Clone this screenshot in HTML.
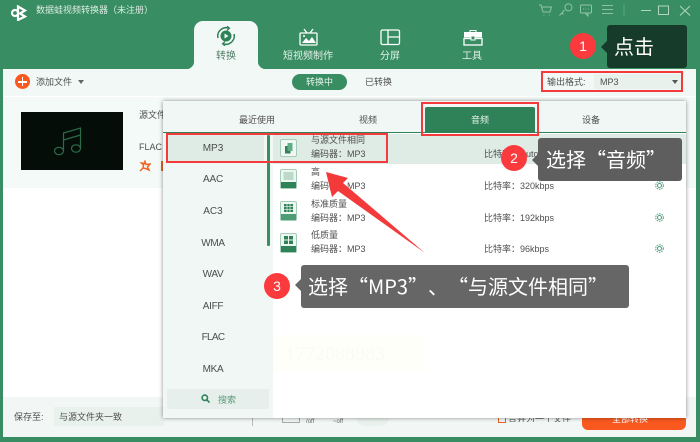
<!DOCTYPE html>
<html><head><meta charset="utf-8">
<style>
html,body{margin:0;padding:0}
body{width:700px;height:442px;overflow:hidden;position:relative;background:#388e62;font-family:"Liberation Sans","Noto Sans CJK SC",sans-serif;color:#555}
.a{position:absolute;white-space:nowrap}
.t{position:absolute;white-space:nowrap;font-size:9px;line-height:12px;color:#4f4f4f}
.c{transform:translateX(-50%)}
.f{position:absolute;left:163px;width:100px;text-align:center;font-size:10px;line-height:14px;color:#4a4f4d}
.red{position:absolute;border:2px solid #f43a3a;box-sizing:border-box}
.tip{position:absolute;border-radius:3px;color:#fff;white-space:nowrap;font-family:"Noto Sans CJK SC",sans-serif;text-spacing-trim:space-all;font-feature-settings:"palt" 0,"halt" 0,"chws" 0}
.num{position:absolute;width:26px;height:26px;border-radius:50%;background:#fa3a3c;color:#fff;text-align:center;font-size:14px;line-height:26px}
.gear{position:absolute;left:655px;width:9px;height:9px}
</style></head><body>
<!-- content background -->
<div class="a" style="left:3px;top:69px;width:693px;height:368px;background:#fff"></div>
<div class="a" style="left:3px;top:69px;width:693px;height:27px;background:#f2f8f5"></div>
<div class="a" style="left:3px;top:97px;width:693px;height:91px;background:#f4faf8"></div>
<div class="a" style="left:3px;top:397px;width:693px;height:40px;background:#f2f7f5"></div>

<!-- title bar -->
<svg class="a" style="left:10px;top:5px" width="18" height="16" viewBox="0 0 18 16" fill="none" stroke="#fff" stroke-width="2.2"><path d="M8 1.500 15 5.500 10 8.500 15 11.500 8 15V1.500Z"/><circle cx="5" cy="8" r="3"/></svg>
<div class="a" style="left:36px;top:4px;font-size:9px;line-height:12px;color:#dcebe3">数据蛙视频转换器（未注册）</div>
<svg class="a" style="left:538px;top:3px" width="158" height="14" viewBox="0 0 158 14" fill="none" stroke="#8fc3a8" stroke-width="1">
<path d="M1 2h2l2 7h7l1.500-5H4M5.500 12h.800M11 12h.800"/>
<path d="M21.500 12.500l5-5.500M24 10l1.500 1.500M27 4.500a3.500 3.500 0 1 1 2 3 3.500 3.500 0 0 1-2-3Z"/>
<rect x="42.500" y="2" width="11" height="8" rx="1"/><path d="M50 10v3l-3-3M45 6h.800M47.500 6h.800M50 6h.800"/>
<path d="M64 2.500h11M64 6.500h11M64 10.500h11"/>
<path d="M86 1v12" stroke="#5ba580"/>
<path d="M103 7.500h10" stroke="#b3d5c3"/>
<rect x="120.500" y="3" width="10" height="8.500" stroke="#b3d5c3"/>
<path d="M142 3l10 9.500M152 3l-10 9.500" stroke="#b3d5c3"/>
</svg>

<!-- main tabs -->
<div class="a" style="left:194px;top:21px;width:64px;height:48px;background:#f2f8f5;border-radius:9px 9px 0 0"></div>
<div class="a" style="left:186px;top:61px;width:8px;height:8px;background:radial-gradient(circle at 0 0,#388e62 8px,#f2f8f5 8.500px)"></div>
<div class="a" style="left:258px;top:61px;width:8px;height:8px;background:radial-gradient(circle at 100% 0,#388e62 8px,#f2f8f5 8.500px)"></div>
<svg class="a" style="left:216px;top:26px" width="20" height="20" viewBox="0 0 20 20" fill="none" stroke="#2f8257" stroke-width="1.500"><path d="M2 12A8.300 8.300 0 0 1 13 2.300M18 8A8.300 8.300 0 0 1 7 17.700"/><path d="M11 0l2.500 2.300L11 4.500M9 15.500 6.500 17.700 9 20" stroke-width="1.200"/><circle cx="10" cy="10" r="5.500" fill="#2f8257" stroke="none"/><path d="M8.500 7.500v5l4-2.500z" fill="#f2f8f5" stroke="none"/></svg>
<div class="a c" style="left:226px;top:50px;font-size:10px;line-height:13px;color:#54806a">转换</div>
<svg class="a" style="left:299px;top:28px" width="19" height="18" viewBox="0 0 19 18" fill="none" stroke="#fff" stroke-width="1.300"><rect x="1" y="5" width="17" height="12" rx="1"/><path d="M5 1l3 4M14 1l-3 4"/><path d="M3 15l4-5 3 3 3-4 4 6z" fill="#fff" stroke="none"/><circle cx="5" cy="8" r="1" fill="#fff" stroke="none"/></svg>
<div class="a c" style="left:308px;top:50px;font-size:10px;line-height:13px;color:#e3f0e9">短视频制作</div>
<svg class="a" style="left:380px;top:29px" width="21" height="17" viewBox="0 0 21 17" fill="none" stroke="#fff" stroke-width="1.300"><rect x="1" y="1" width="18.500" height="14.500" rx="1.500"/><path d="M8 1v14.500M8 8h11.500"/></svg>
<div class="a c" style="left:390px;top:50px;font-size:10px;line-height:13px;color:#e3f0e9">分屏</div>
<svg class="a" style="left:463px;top:29px" width="20" height="17" viewBox="0 0 20 17"><path d="M7 3V1.500h6V3" stroke="#fff" fill="none"/><rect x="1" y="3" width="18" height="5.500" fill="#fff"/><rect x="1" y="9.500" width="18" height="6.500" fill="none" stroke="#fff" stroke-width="1.300"/><rect x="8" y="7" width="4" height="4" fill="#388e62" stroke="#fff"/></svg>
<div class="a c" style="left:472px;top:50px;font-size:10px;line-height:13px;color:#e3f0e9">工具</div>

<!-- toolbar -->
<div class="a" style="left:15px;top:74px;width:15px;height:15px;border-radius:50%;background:#f9591f"></div>
<div class="a" style="left:18px;top:81px;width:9px;height:1.500px;background:#fff"></div>
<div class="a" style="left:21.800px;top:77px;width:1.500px;height:9px;background:#fff"></div>
<div class="t" style="left:36px;top:76px">添加文件</div>
<div class="a" style="left:78px;top:80px;border:3px solid transparent;border-top:4px solid #666;border-bottom:0"></div>
<div class="a" style="left:292px;top:74px;width:55px;height:16px;border-radius:8px;background:#388e62;color:#e9f4ee;font-size:9px;line-height:16px;text-align:center">转换中</div>
<div class="t" style="left:365px;top:76px">已转换</div>
<div class="a" style="left:594px;top:74px;width:88px;height:15px;background:#e9f1ed"></div>
<div class="t" style="left:547px;top:76px">输出格式:</div>
<div class="t" style="left:600px;top:76px">MP3</div>
<div class="a" style="left:672px;top:80px;border:3px solid transparent;border-top:4px solid #555;border-bottom:0"></div>
<div class="red" style="left:541px;top:71px;width:142px;height:21px"></div>

<!-- file card -->
<div class="a" style="left:21px;top:112px;width:102px;height:58px;background:#050d09"></div>
<svg class="a" style="left:53px;top:126px" width="30" height="30" viewBox="0 0 30 30" fill="none" stroke="#2a6b4a" stroke-width="1.200"><ellipse cx="6" cy="25" rx="4.500" ry="3.700"/><ellipse cx="23" cy="22.500" rx="4.500" ry="3.700"/><path d="M10.500 25V7L27.500 2v20M10.500 14 27.500 9"/></svg>
<div class="t" style="left:139px;top:109px">源文件</div>
<div class="t" style="left:139px;top:141px;font-size:9px">FLAC</div>
<svg class="a" style="left:139px;top:160px" width="12" height="12" viewBox="0 0 12 12" fill="none" stroke="#f36424" stroke-width="1.500"><path d="M1 11l3-3M6 1.500l1 3 4-.500-2.500 3L10 10 6.500 8.500 4 8l.500-3L2.500 3l3 .500z"/></svg>
<div class="a" style="left:161px;top:161px;width:2px;height:10px;background:#f36424"></div>

<!-- bottom bar -->
<div class="t" style="left:14px;top:411px">保存至:</div>
<div class="a" style="left:54px;top:407px;width:110px;height:19px;background:#e9f1ed"></div>
<div class="t" style="left:59px;top:411px">与源文件夹一致</div>
<div class="a" style="left:252px;top:418px;width:1px;height:8px;background:#bbb"></div>
<div class="a" style="left:282px;top:418px;width:16px;height:4px;border:1px solid #aaa;border-top:0"></div>
<div class="a" style="left:306px;top:419px;font-size:6px;line-height:7px;color:#666">/off</div>
<div class="a" style="left:333px;top:419px;font-size:6px;line-height:7px;color:#666">~off</div>
<div class="a" style="left:357px;top:418px;width:32px;height:8px;border-radius:0 0 8px 8px;background:#e9f1ed"></div>
<div class="a" style="left:498px;top:418px;width:8px;height:5px;border:1.500px solid #e8602c;border-top:0;box-sizing:border-box"></div>
<div class="a" style="left:582px;top:418px;width:104px;height:12px;background:#f9591f;border-radius:0 0 6px 6px;overflow:hidden"></div>
<div class="a" style="left:508px;top:413px;height:9px;overflow:hidden;width:65px;font-size:9px;line-height:12px;color:#555">合并为一个文件</div>
<div class="a" style="left:612px;top:413px;width:50px;height:9px;overflow:visible;font-size:9px;line-height:12px;color:#fff;z-index:1">全部转换</div>

<!-- format panel -->
<div class="a" style="left:163px;top:101px;width:523px;height:317px;background:#fff;box-shadow:0 0 4px rgba(0,0,0,.45);z-index:2"></div>
<div style="position:absolute;left:0;top:0;width:700px;height:442px;z-index:3">
<div class="a" style="left:163px;top:101px;width:523px;height:31px;background:#f1f7f5"></div>
<div class="a" style="left:163px;top:132px;width:523px;height:1px;background:#2f8257"></div>
<div class="a" style="left:163px;top:133px;width:110px;height:285px;background:#f1f7f5"></div>
<div class="t c" style="left:257px;top:114px">最近使用</div>
<div class="t c" style="left:368px;top:114px">视频</div>
<div class="a" style="left:425px;top:107px;width:110px;height:25px;background:#2f8257;border-radius:2px 2px 0 0"></div>
<div class="t c" style="left:480px;top:114px;color:#e8f3ed">音频</div>
<div class="t c" style="left:591px;top:114px">设备</div>

<div class="a" style="left:168px;top:135px;width:96px;height:27px;background:#dfece6"></div>
<div class="f" style="top:142px">MP3</div>
<div class="f" style="top:173px;letter-spacing:-.2px">AAC</div>
<div class="f" style="top:205px">AC3</div>
<div class="f" style="top:237px;letter-spacing:-.3px">WMA</div>
<div class="f" style="top:268px;letter-spacing:-.3px">WAV</div>
<div class="f" style="top:300px;letter-spacing:-.3px">AIFF</div>
<div class="f" style="top:331px;letter-spacing:-.7px">FLAC</div>
<div class="f" style="top:363px;letter-spacing:-.3px">MKA</div>
<div class="a" style="left:167px;top:389px;width:102px;height:20px;border-radius:2px;background:#e6efeb"></div>
<svg class="a" style="left:201px;top:394px" width="9" height="9" viewBox="0 0 9 9" fill="none" stroke="#2f8257" stroke-width="1.600"><circle cx="3.800" cy="3.800" r="2.700"/><path d="M6 6l2.500 2.500"/></svg>
<div class="t" style="left:218px;top:394px;color:#5a9c7b">搜索</div>
<div class="a" style="left:267px;top:135px;width:3px;height:111px;background:#388e62;border-radius:1px"></div>

<div class="a" style="left:273px;top:134px;width:413px;height:30px;background:#dfebe5"></div>
<!-- row icons -->
<svg class="a" style="left:280px;top:139px" width="17" height="18" viewBox="0 0 17 18"><rect x=".5" y=".5" width="16" height="17" rx="1.500" fill="#f1f7f5" stroke="#a5cdb8"/><rect x="5" y="7" width="5.500" height="7.500" fill="#2f8257"/><rect x="7.500" y="4" width="5" height="8" fill="#5fae88"/></svg>
<svg class="a" style="left:280px;top:169px" width="17" height="20" viewBox="0 0 17 20"><rect x=".5" y=".5" width="16" height="19" rx="1.500" fill="#eef6f2" stroke="#a5cdb8"/><path d="M3.500 3h10v8h-10z" fill="#bcd9ca"/><rect x="1" y="13" width="15" height="6" fill="#2f8257"/></svg>
<svg class="a" style="left:280px;top:201px" width="17" height="20" viewBox="0 0 17 20"><rect x=".5" y=".5" width="16" height="19" rx="1.500" fill="#eef6f2" stroke="#a5cdb8"/><path d="M4 3h9v8H4z" fill="#2f8257"/><path d="M4 5.700h9M4 8.300h9M7 3v8M10 3v8" stroke="#eef6f2" stroke-width=".7"/><rect x="1" y="13" width="15" height="6" fill="#4c9d76"/></svg>
<svg class="a" style="left:280px;top:233px" width="17" height="20" viewBox="0 0 17 20"><rect x=".5" y=".5" width="16" height="19" rx="1.500" fill="#eef6f2" stroke="#a5cdb8"/><path d="M4 3h9v8H4z" fill="#2f8257"/><path d="M4 7h9M8.500 3v8" stroke="#eef6f2"/><rect x="1" y="13" width="15" height="6" fill="#2f8257"/></svg>
<div class="t" style="left:311px;top:134px">与源文件相同</div>
<div class="t" style="left:311px;top:148px">编码器：MP3</div>
<div class="t" style="left:311px;top:166px">高</div>
<div class="t" style="left:311px;top:180px">编码器：MP3</div>
<div class="t" style="left:311px;top:198px">标准质量</div>
<div class="t" style="left:311px;top:212px">编码器：MP3</div>
<div class="t" style="left:311px;top:229px">低质量</div>
<div class="t" style="left:311px;top:243px">编码器：MP3</div>
<div class="t" style="left:484px;top:148px">比特率：Auto</div>
<div class="t" style="left:484px;top:180px">比特率：320kbps</div>
<div class="t" style="left:484px;top:212px">比特率：192kbps</div>
<div class="t" style="left:484px;top:243px">比特率：96kbps</div>
<svg class="gear" style="top:149px" viewBox="0 0 9 9" fill="none" stroke="#2f8257"><circle cx="4.500" cy="4.500" r="2"/><circle cx="4.500" cy="4.500" r="3.800" stroke-dasharray="1.500 1"/></svg>
<svg class="gear" style="top:181px" viewBox="0 0 9 9" fill="none" stroke="#4c9d76"><circle cx="4.500" cy="4.500" r="2"/><circle cx="4.500" cy="4.500" r="3.800" stroke-dasharray="1.500 1"/></svg>
<svg class="gear" style="top:213px" viewBox="0 0 9 9" fill="none" stroke="#4c9d76"><circle cx="4.500" cy="4.500" r="2"/><circle cx="4.500" cy="4.500" r="3.800" stroke-dasharray="1.500 1"/></svg>
<svg class="gear" style="top:244px" viewBox="0 0 9 9" fill="none" stroke="#4c9d76"><circle cx="4.500" cy="4.500" r="2"/><circle cx="4.500" cy="4.500" r="3.800" stroke-dasharray="1.500 1"/></svg>

<div class="a" style="left:273px;top:335px;width:152px;height:36px;background:#fffffa"></div>
<div class="a" style="left:285px;top:342px;font-family:'Liberation Serif',serif;font-size:20px;line-height:24px;color:#fbfbf3">1772088983</div>

<!-- red boxes -->
<div class="red" style="left:421px;top:102px;width:118px;height:34px"></div>
<div class="red" style="left:166px;top:133px;width:222px;height:30px"></div>

<!-- arrow -->
<svg class="a" style="left:320px;top:170px" width="110" height="90" viewBox="0 0 110 90"><path d="M6 2 28 8 23 13 105 83 18 21 12 27z" fill="#f4393b"/></svg>

<!-- callouts -->
<div class="tip" style="left:607px;top:25px;width:80px;height:43px;background:#173b2a;font-size:20px;line-height:41px;text-indent:7px">点击</div>
<div class="a" style="left:601px;top:41px;border:6px solid transparent;border-right:6px solid #173b2a;border-left:0"></div>
<div class="num" style="left:570px;top:33px">1</div>
<div class="tip" style="left:538px;top:138px;width:144px;height:43px;background:#5e5e5e;font-size:20px;line-height:41px;text-indent:8px">选择“音频”</div>
<div class="a" style="left:532px;top:154px;border:6px solid transparent;border-right:6px solid #5e5e5e;border-left:0"></div>
<div class="num" style="left:501px;top:145px">2</div>
<div class="tip" style="left:301px;top:265px;width:328px;height:43px;background:#666;font-size:20px;line-height:41px;text-indent:7px">选择“MP3”、“与源文件相同”</div>
<div class="a" style="left:295px;top:279px;border:6px solid transparent;border-right:6px solid #666;border-left:0"></div>
<div class="num" style="left:264px;top:273px">3</div>
</div>
</body></html>
